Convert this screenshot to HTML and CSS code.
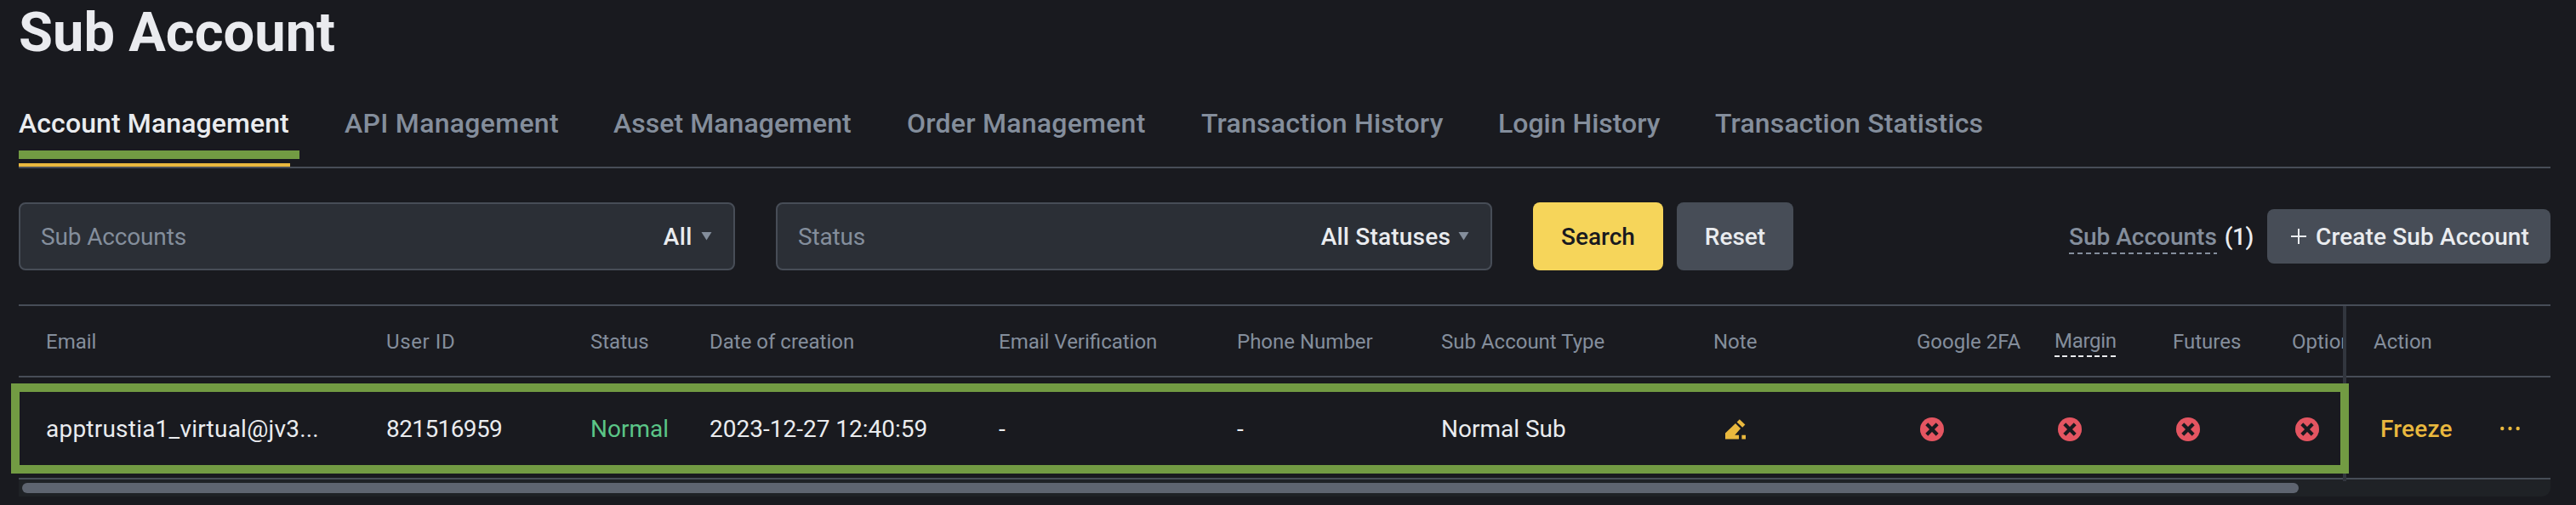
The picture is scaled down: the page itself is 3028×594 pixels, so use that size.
FILE: index.html
```html
<!DOCTYPE html>
<html lang="en">
<head>
<meta charset="utf-8">
<title>Sub Account</title>
<link rel="stylesheet" href="styles.css">
</head>
<body>
<svg class="defs" aria-hidden="true">
  <symbol id="cross" viewBox="0 0 28 28"><circle cx="14" cy="14" r="14" fill="#e45561"/><path d="M7.8 7.8l12.4 12.4M20.2 7.8L7.8 20.2" stroke="#191a1f" stroke-width="4.2"/></symbol>
</svg>
<main class="page">
  <h1 class="title">Sub Account</h1>
  <nav class="tabs">
    <a class="tab tab-active">Account Management<span class="underline-mark"></span></a>
    <a class="tab tab-api">API Management</a>
    <a class="tab tab-asset">Asset Management</a>
    <a class="tab tab-order">Order Management</a>
    <a class="tab tab-transaction">Transaction History</a>
    <a class="tab tab-login">Login History</a>
    <a class="tab tab-stats">Transaction Statistics</a>
  </nav>
  <section class="filters">
    <div class="field"><span class="label">Sub Accounts</span><span class="value value-all">All</span><svg class="arrow" viewBox="0 0 12 10"><path d="M0 0h12L6 9.5z"/></svg></div>
    <div class="field field-status"><span class="label">Status</span><span class="value">All Statuses</span><svg class="arrow" viewBox="0 0 12 10"><path d="M0 0h12L6 9.5z"/></svg></div>
    <button class="btn btn-search">Search</button>
    <button class="btn btn-reset">Reset</button>
    <div class="count"><span class="count-label">Sub Accounts</span><span class="count-num">(1)</span></div>
    <button class="btn btn-create"><svg class="plus" viewBox="0 0 20 20"><path d="M10 1v18M1 10h18"/></svg>Create Sub Account</button>
  </section>
  <section class="table">
    <div class="row head">
      <span class="cell">Email</span>
      <span class="cell user-id">User ID</span>
      <span class="cell">Status</span>
      <span class="cell">Date of creation</span>
      <span class="cell">Email Verification</span>
      <span class="cell">Phone Number</span>
      <span class="cell">Sub Account Type</span>
      <span class="cell">Note</span>
      <span class="cell">Google 2FA</span>
      <span class="cell"><span class="margin-label">Margin</span></span>
      <span class="cell">Futures</span>
      <span class="cell clipped">Options</span>
      <span class="cell action">Action</span>
    </div>
    <div class="row body">
      <span class="cell email">apptrustia1_virtual@jv3...</span>
      <span class="cell id">821516959</span>
      <span class="cell normal">Normal</span>
      <span class="cell">2023-12-27 12:40:59</span>
      <span class="cell">-</span>
      <span class="cell">-</span>
      <span class="cell">Normal Sub</span>
      <span class="cell icon-cell"><svg class="pencil" viewBox="0 0 24 24"><path d="M0 16.5L12 5l6 6-6.8 7.8H16V23.5H0zM13.6 3.4L16.8.2 23.4 6.6 20.2 9.8zM19.4 18.8H24v4.7h-4.6z"/></svg></span>
      <span class="cell icon-cell"><svg class="cross"><use href="#cross"/></svg></span>
      <span class="cell icon-cell"><svg class="cross"><use href="#cross"/></svg></span>
      <span class="cell icon-cell"><svg class="cross"><use href="#cross"/></svg></span>
      <span class="cell icon-cell"><svg class="cross"><use href="#cross"/></svg></span>
      <span class="cell action"><span class="freeze">Freeze</span><svg class="dots" viewBox="0 0 24 6"><circle cx="2.3" cy="3" r="2.2"/><circle cx="11.5" cy="3" r="2.2"/><circle cx="20.7" cy="3" r="2.2"/></svg></span>
      <span class="row-mark"></span>
    </div>
    <div class="scrollbar"><div class="thumb"></div></div>
  </section>
</main>
</body>
</html>
```
FILE: styles.css
```css
* { box-sizing: border-box; }
body { margin: 0; background: #191a1f; color: #eaecef; font: 28px Roboto, sans-serif; overflow: hidden; }
.defs { position: absolute; width: 0; height: 0; }
.page { height: 594px; padding: 0 30px 0 22px; }
.title { margin: 0; font-size: 65px; font-weight: 700; line-height: 76px; letter-spacing: 0; color: #eaebef; }

.tabs { display: flex; gap: 64px; height: 122px; padding-top: 49px; border-bottom: 2px solid #474d57; }
.tab { position: relative; flex: none; width: 319px; font-size: 32px; font-weight: 500; line-height: 40px; color: #848e9c; white-space: nowrap; }
.tab-active { height: 71px; color: #eaecef; border-bottom: 4px solid #e9b83e; letter-spacing: 0.1px; }
.tab-api { width: 252px; letter-spacing: 0.3px; }
.tab-asset { width: 281px; letter-spacing: 0.05px; }
.tab-order { width: 282px; letter-spacing: 0.25px; }
.tab-transaction { width: 285px; letter-spacing: 0.22px; }
.tab-login { width: 191px; }
.tab-stats { width: 316px; letter-spacing: 0.15px; }
.underline-mark { position: absolute; left: 0; top: 52px; width: 330px; height: 10px; background: #729b43; }

.filters { display: flex; align-items: center; margin-top: 40px; height: 80px; }
.field { display: flex; align-items: center; width: 842px; height: 80px; padding: 0 24px; border: 2px solid #474d57; border-radius: 8px; background: #2b2f36; }
.field-status { margin-left: 48px; }
.label { color: #848e9c; letter-spacing: -0.15px; }
.value { margin-left: auto; margin-right: 9px; font-weight: 500; letter-spacing: 0.2px; }
.value-all { margin-right: 10px; letter-spacing: 0.5px; }
.arrow { width: 13px; height: 10px; margin-right: 1px; fill: #848e9c; }
.btn { border: 0; padding: 0; height: 80px; border-radius: 8px; font: 500 28px Roboto, sans-serif; color: #eaecef; background: #474d57; }
.btn-search { margin-left: 48px; width: 153px; background: #f6d55a; color: #191a1f; }
.btn-reset { margin-left: 16px; width: 137px; }
.count { display: flex; align-items: flex-start; gap: 9px; height: 43px; margin-left: auto; font-weight: 500; line-height: 43px; }
.count-label { height: 42px; color: #848e9c; background: repeating-linear-gradient(90deg, #848e9c 0 6px, transparent 6px 10px) 0 100% / 100% 2px no-repeat; }
.count-num { letter-spacing: -0.4px; }
.btn-create { display: flex; align-items: center; height: 64px; width: 333px; margin-left: 16px; padding-left: 27px; letter-spacing: 0.13px; }
.plus { width: 20px; height: 20px; margin-right: 10px; fill: none; stroke: #eaecef; stroke-width: 2; }

.table { margin-top: 40px; border-top: 2px solid #474d57; }
.row { position: relative; display: grid; grid-template-columns: 400px 240px 140px 340px 280px 240px 320px 239px 162px 139px 140px 64px 1fr; padding-left: 32px; border-bottom: 2px solid #474d57; white-space: nowrap; }
.head { height: 84px; font-size: 24px; line-height: 84px; color: #848e9c; }
.body { height: 120px; line-height: 121px; }
.cell { min-width: 0; height: 100%; }
.user-id { letter-spacing: 0.6px; }
.margin-label { display: inline-block; height: 34px; line-height: 31px; vertical-align: middle; position: relative; top: -1px; letter-spacing: -0.3px; background: repeating-linear-gradient(90deg, #eaecef 0 6px, transparent 6px 9.4px) 0 100% / 100% 2px no-repeat; }
.clipped { overflow: hidden; }
.action { position: relative; padding-left: 32px; }
.action::before { content: ""; position: absolute; left: -4px; top: 0; width: 4px; height: 100%; background: #32363e; }
.email { letter-spacing: 0.22px; }
.id { letter-spacing: -0.6px; }
.normal { color: #5bc587; }
.icon-cell { display: flex; align-items: center; padding: 0 0 0 4px; }
.cross { width: 28px; height: 28px; }
.pencil { width: 24px; height: 24px; margin-left: 10px; fill: #e9b83e; }
.body .action { display: flex; align-items: center; line-height: 122px; color: #e9b83e; }
.freeze { margin-left: 8px; font-weight: 500; letter-spacing: 0.2px; }
.dots { width: 24px; height: 6px; margin: -3px 0 0 56px; fill: #e9b83e; }
.row-mark { position: absolute; left: -9px; top: 7px; width: 2748px; height: 106px; border: 10px solid #729b43; }
.scrollbar { height: 20px; padding: 4px; background: #1f2226; border-radius: 0 0 10px 0; }
.thumb { width: 2676px; height: 12px; border-radius: 6px; background: #5e6470; }
```
